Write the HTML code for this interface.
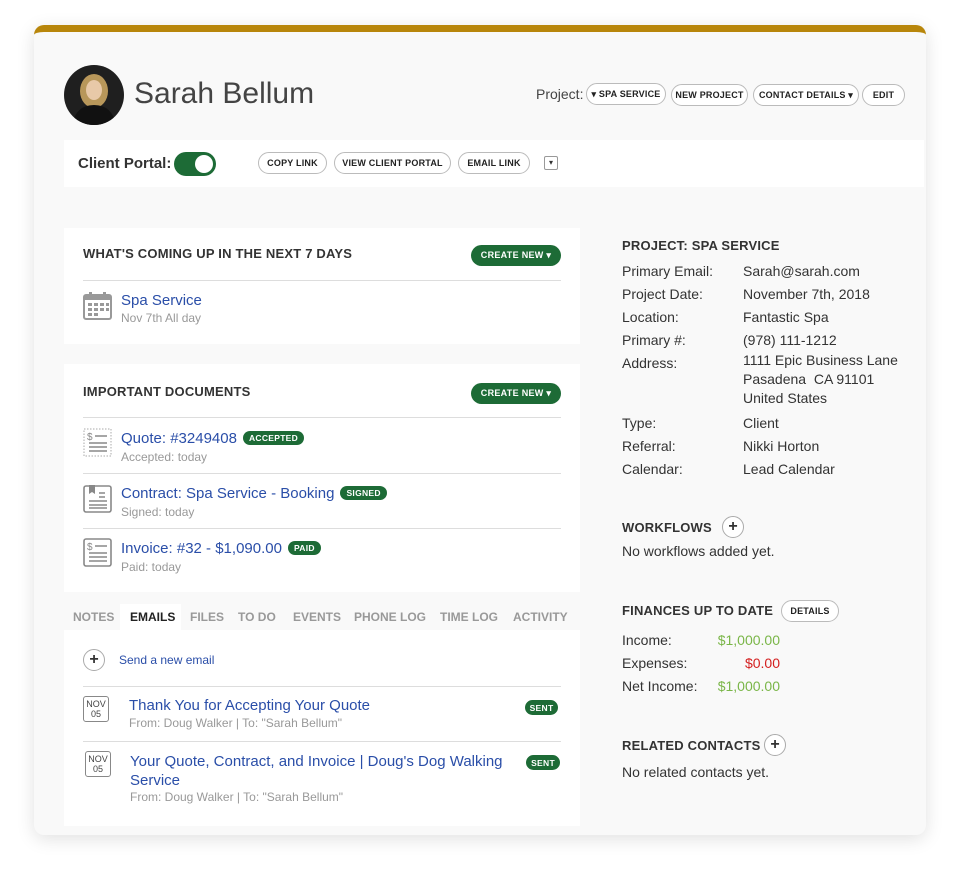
<!DOCTYPE html>
<html><head><meta charset="utf-8"><style>
*{box-sizing:border-box;margin:0;padding:0}
body{width:960px;height:879px;background:#fff;font-family:"Liberation Sans",sans-serif;color:#333;position:relative;overflow:hidden}
.a{position:absolute;white-space:nowrap}
.card{position:absolute;left:34px;top:25px;width:892px;height:810px;background:#f9f9f9;border-radius:10px;border-top:7px solid #b8860b;box-shadow:0 4px 18px rgba(0,0,0,.12)}
.btn{position:absolute;height:22px;border:1.5px solid #bbb;border-radius:11px;background:#fff;font-size:9px;font-weight:bold;color:#222;display:flex;align-items:center;justify-content:center;letter-spacing:.2px}
.panel{position:absolute;background:#fff}
.h{font-size:13px;font-weight:bold;color:#333;letter-spacing:.2px}
.cn{position:absolute;width:90px;height:21px;border-radius:11px;background:#1d6b36;color:#fff;font-size:9px;font-weight:bold;display:flex;align-items:center;justify-content:center;letter-spacing:.3px}
.line{position:absolute;height:1px;background:#ddd}
.lk{color:#2a4ea8;font-size:15px}
.sub{color:#999;font-size:12px}
.tag{display:inline-block;background:#1d6b36;color:#fff;font-size:8.5px;font-weight:bold;border-radius:8px;padding:2px 6px;vertical-align:2px;margin-left:6px;letter-spacing:.3px}
.r{font-size:14px;color:#333}
.tab{position:absolute;top:610px;font-size:12px;font-weight:bold;color:#999}
.plus{position:absolute;width:22px;height:22px;border:1.5px solid #aaa;border-radius:50%;background:#fff;font-size:16px;font-weight:bold;display:flex;align-items:center;justify-content:center;color:#333;line-height:1}
.nov{position:absolute;width:26px;height:26px;border:1.5px solid #888;border-radius:3px;font-size:9px;line-height:10px;text-align:center;color:#444;padding-top:2px;background:#fff}
</style></head><body>
<div class="card"></div>
<div class="a" style="left:64px;top:65px;width:60px;height:60px;border-radius:50%;background:#1f1f1f;overflow:hidden">
<svg width="60" height="60"><ellipse cx="30" cy="26" rx="14" ry="17" fill="#b8975a"/><ellipse cx="30" cy="25" rx="8" ry="10" fill="#e8c9a8"/><path d="M8 60 Q12 40 30 40 Q48 40 52 60Z" fill="#111"/></svg></div>
<div class="a" style="left:134px;top:77px;font-size:30px;color:#444">Sarah Bellum</div>
<div class="a" style="left:536px;top:86px;font-size:14px;color:#444">Project:</div>
<div class="btn" style="left:586px;top:83px;width:80px">▾ SPA SERVICE</div>
<div class="btn" style="left:671px;top:84px;width:77px">NEW PROJECT</div>
<div class="btn" style="left:753px;top:84px;width:106px">CONTACT DETAILS ▾</div>
<div class="btn" style="left:862px;top:84px;width:43px">EDIT</div>
<div class="panel" style="left:64px;top:140px;width:860px;height:47px"></div>
<div class="a" style="left:78px;top:155px;font-size:15px;font-weight:bold;color:#333">Client Portal:</div>
<div class="a" style="left:174px;top:152px;width:42px;height:24px;border-radius:12px;background:#1d6b36"><div style="position:absolute;right:3px;top:3px;width:18px;height:18px;border-radius:50%;background:#fff"></div></div>
<div class="btn" style="left:258px;top:152px;width:69px">COPY LINK</div>
<div class="btn" style="left:334px;top:152px;width:117px">VIEW CLIENT PORTAL</div>
<div class="btn" style="left:458px;top:152px;width:72px">EMAIL LINK</div>
<div class="a" style="left:544px;top:156px;width:14px;height:14px;border:1.5px solid #999;border-radius:2px;background:#fff;font-size:8px;text-align:center;line-height:11px">▾</div>
<div class="panel" style="left:64px;top:228px;width:516px;height:116px"></div>
<div class="a h" style="left:83px;top:246px">WHAT'S COMING UP IN THE NEXT 7 DAYS</div>
<div class="cn" style="left:471px;top:245px">CREATE NEW ▾</div>
<div class="line" style="left:83px;top:280px;width:478px"></div>
<svg class="a" style="left:83px;top:291px" width="29" height="29"><rect x="1" y="4" width="27" height="24" rx="2" fill="none" stroke="#999" stroke-width="2"/><rect x="1" y="4" width="27" height="5" fill="#999"/><rect x="6" y="1" width="3" height="6" fill="#999"/><rect x="20" y="1" width="3" height="6" fill="#999"/><g fill="#999"><rect x="5" y="12" width="4" height="3"/><rect x="11" y="12" width="4" height="3"/><rect x="17" y="12" width="4" height="3"/><rect x="5" y="17" width="4" height="3"/><rect x="11" y="17" width="4" height="3"/><rect x="17" y="17" width="4" height="3"/><rect x="5" y="22" width="4" height="3"/><rect x="11" y="22" width="4" height="3"/><rect x="23" y="12" width="3" height="3"/><rect x="23" y="17" width="3" height="3"/></g></svg>
<div class="a lk" style="left:121px;top:292px">Spa Service</div>
<div class="a sub" style="left:121px;top:311px">Nov 7th All day</div>
<div class="panel" style="left:64px;top:364px;width:516px;height:228px"></div>
<div class="a h" style="left:83px;top:384px">IMPORTANT DOCUMENTS</div>
<div class="cn" style="left:471px;top:383px">CREATE NEW ▾</div>
<div class="line" style="left:83px;top:417px;width:478px"></div>
<svg class="a" style="left:83px;top:428px" width="29" height="29"><rect x="1" y="1" width="27" height="27" fill="none" stroke="#aaa" stroke-dasharray="1.5 1.5"/><text x="4" y="12" font-size="10" fill="#888" font-family="Liberation Sans">$</text><path d="M12 8h12M6 15h18M6 19h18M6 23h18" stroke="#888" stroke-width="1.6"/></svg>
<div class="a lk" style="left:121px;top:430px">Quote: #3249408<span class="tag">ACCEPTED</span></div>
<div class="a sub" style="left:121px;top:450px">Accepted: today</div>
<div class="line" style="left:83px;top:473px;width:478px"></div>
<svg class="a" style="left:83px;top:483px" width="29" height="30"><rect x="1" y="3" width="27" height="26" rx="2" fill="none" stroke="#888" stroke-width="1.6"/><path d="M6 2v9l3-2 3 2V2z" fill="#888"/><path d="M16 10h6M16 14h6M6 18h18M6 22h18M6 25h18" stroke="#888" stroke-width="1.4"/></svg>
<div class="a lk" style="left:121px;top:485px">Contract: Spa Service - Booking<span class="tag">SIGNED</span></div>
<div class="a sub" style="left:121px;top:505px">Signed: today</div>
<div class="line" style="left:83px;top:528px;width:478px"></div>
<svg class="a" style="left:83px;top:538px" width="29" height="30"><rect x="1" y="1" width="27" height="27" rx="2" fill="none" stroke="#888" stroke-width="1.6"/><text x="4" y="12" font-size="10" fill="#888" font-family="Liberation Sans">$</text><path d="M12 8h12M6 15h18M6 19h18M6 23h18" stroke="#888" stroke-width="1.6"/></svg>
<div class="a lk" style="left:121px;top:540px">Invoice: #32 - $1,090.00<span class="tag">PAID</span></div>
<div class="a sub" style="left:121px;top:560px">Paid: today</div>
<div class="panel" style="left:120px;top:604px;width:61px;height:28px"></div>
<div class="tab" style="left:73px">NOTES</div>
<div class="tab" style="left:130px;color:#222">EMAILS</div>
<div class="tab" style="left:190px">FILES</div>
<div class="tab" style="left:238px">TO DO</div>
<div class="tab" style="left:293px">EVENTS</div>
<div class="tab" style="left:354px">PHONE LOG</div>
<div class="tab" style="left:440px">TIME LOG</div>
<div class="tab" style="left:513px">ACTIVITY</div>
<div class="panel" style="left:64px;top:630px;width:516px;height:196px"></div>
<div class="plus" style="left:83px;top:649px">+</div>
<div class="a" style="left:119px;top:653px;font-size:12px;color:#2a4ea8">Send a new email</div>
<div class="line" style="left:83px;top:686px;width:478px"></div>
<div class="nov" style="left:83px;top:696px">NOV<br>05</div>
<div class="a lk" style="left:129px;top:697px">Thank You for Accepting Your Quote</div>
<div class="a sub" style="left:129px;top:716px">From: Doug Walker | To: "Sarah Bellum"</div>
<div class="cn" style="left:525px;top:700px;width:33px;height:15px;font-size:8.5px">SENT</div>
<div class="line" style="left:83px;top:741px;width:478px"></div>
<div class="nov" style="left:85px;top:751px">NOV<br>05</div>
<div class="a lk" style="left:130px;top:752px;line-height:19px">Your Quote, Contract, and Invoice | Doug's Dog Walking<br>Service</div>
<div class="a sub" style="left:130px;top:790px">From: Doug Walker | To: "Sarah Bellum"</div>
<div class="cn" style="left:526px;top:755px;width:34px;height:15px;font-size:8.5px">SENT</div>
<div class="a h" style="left:622px;top:238px">PROJECT: SPA SERVICE</div>
<div class="a r" style="left:622px;top:260px;line-height:23px">Primary Email:<br>Project Date:<br>Location:<br>Primary #:<br>Address:</div>
<div class="a r" style="left:743px;top:260px;line-height:23px">Sarah@sarah.com<br>November 7th, 2018<br>Fantastic Spa<br>(978) 111-1212</div>
<div class="a r" style="left:743px;top:351px;line-height:19px">1111 Epic Business Lane<br>Pasadena&nbsp; CA 91101<br>United States</div>
<div class="a r" style="left:622px;top:412px;line-height:23px">Type:<br>Referral:<br>Calendar:</div>
<div class="a r" style="left:743px;top:412px;line-height:23px">Client<br>Nikki Horton<br>Lead Calendar</div>
<div class="a h" style="left:622px;top:520px">WORKFLOWS</div>
<div class="plus" style="left:722px;top:516px">+</div>
<div class="a r" style="left:622px;top:543px">No workflows added yet.</div>
<div class="a h" style="left:622px;top:603px">FINANCES UP TO DATE</div>
<div class="btn" style="left:781px;top:600px;width:58px">DETAILS</div>
<div class="a r" style="left:622px;top:629px;line-height:23px">Income:<br>Expenses:<br>Net Income:</div>
<div class="a r" style="left:680px;width:100px;top:629px;line-height:23px;text-align:right"><span style="color:#7ab648">$1,000.00</span><br><span style="color:#d42020">$0.00</span><br><span style="color:#7ab648">$1,000.00</span></div>
<div class="a h" style="left:622px;top:738px">RELATED CONTACTS</div>
<div class="plus" style="left:764px;top:734px">+</div>
<div class="a r" style="left:622px;top:764px">No related contacts yet.</div>
</body></html>
